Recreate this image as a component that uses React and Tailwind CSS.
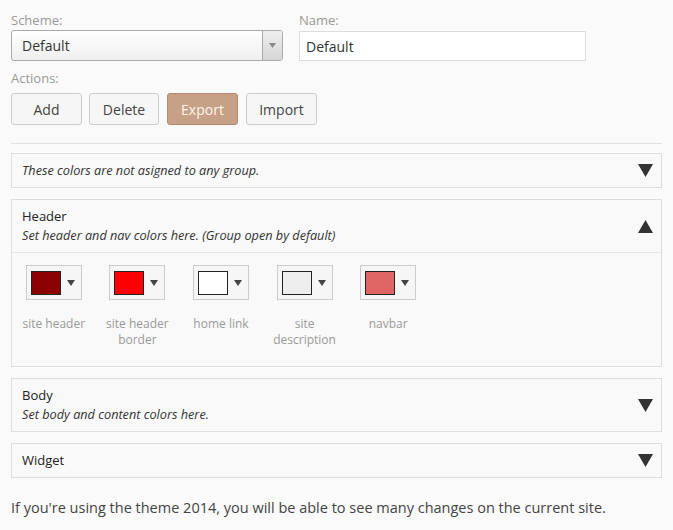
import React from "react";

const swatches = [
  { color: "#8b0000", label: ["site header"] },
  { color: "#ff0000", label: ["site header", "border"] },
  { color: "#ffffff", label: ["home link"] },
  { color: "#eeeeee", label: ["site", "description"] },
  { color: "#e06666", label: ["navbar"] },
];

function Tri({ up, className }) {
  return (
    <svg width="15" height="13" viewBox="0 0 15 13" className={className} aria-hidden>
      {up ? <path d="M7.5 0 L15 13 L0 13 Z" fill="#333" /> : <path d="M0 0 L15 0 L7.5 13 Z" fill="#333" />}
    </svg>
  );
}

function Group({ title, sub, open, children }) {
  return (
    <div className="border border-[#dedede] bg-[#f9f9f9]">
      <div className="flex items-center justify-between pl-[10px] pr-[8px] py-[7px] min-h-[33px]">
        <div>
          {title && <div className="text-[13px] leading-[19px] text-[#222]">{title}</div>}
          {sub && <div className="text-[12.7px] leading-[19px] italic text-[#333]">{sub}</div>}
        </div>
        <Tri up={open} />
      </div>
      {children}
    </div>
  );
}

export default function App() {
  return (
    <div
      className="min-h-[530px] w-[673px] bg-[#fafafa] px-[11px] text-[#333]"
      style={{ fontFamily: "'Open Sans', 'Liberation Sans', sans-serif" }}
    >
      <div className="flex gap-[16px] pt-[10px]">
        <div className="w-[272px]">
          <div className="text-[13px] leading-[20px] text-[#999]">Scheme:</div>
          <div className="flex h-[31px] overflow-hidden rounded-[3px] border border-[#aaa] bg-gradient-to-b from-white to-[#efefef]">
            <div className="flex flex-1 items-center pl-[10px] text-[14px]">Default</div>
            <div className="flex w-[20px] items-center justify-center border-l border-[#aaa] bg-gradient-to-b from-[#eee] to-[#d5d5d5]">
              <svg width="7" height="5" viewBox="0 0 7 5"><path d="M0 0 L7 0 L3.5 5 Z" fill="#888" /></svg>
            </div>
          </div>
        </div>
        <div className="w-[287px]">
          <div className="text-[13px] leading-[20px] text-[#999]">Name:</div>
          <div className="mt-[1px] flex h-[30px] items-center border border-[#ddd] bg-white pl-[6px] text-[14px]">Default</div>
        </div>
      </div>

      <div className="mt-[7px] text-[13px] leading-[20px] text-[#999]">Actions:</div>
      <div className="mt-[5px] flex text-[14px]">
        <button className="h-[32px] w-[71px] rounded-[3px] border border-[#ccc] bg-[#f6f6f6] text-[#444]">Add</button>
        <button className="ml-[7px] h-[32px] w-[70px] rounded-[3px] border border-[#ccc] bg-[#f6f6f6] text-[#444]">Delete</button>
        <button className="ml-[8px] h-[32px] w-[71px] rounded-[3px] border border-[#b68c6c] bg-[#c6a185] text-[#fdf6ee]">Export</button>
        <button className="ml-[8px] h-[32px] w-[71px] rounded-[3px] border border-[#ccc] bg-[#f6f6f6] text-[#444]">Import</button>
      </div>

      <div className="mt-[18px] border-t border-[#e2e2e2]" />

      <div className="mt-[9px] flex flex-col gap-[11px]">
        <Group sub="These colors are not asigned to any group." />
        <Group title="Header" sub="Set header and nav colors here. (Group open by default)" open>
          <div className="flex border-t border-[#e6e6e6] pb-[18px] pt-[12px]">
            {swatches.map((s) => (
              <div key={s.color} className="flex w-[83.6px] flex-col items-center">
                <div className="flex h-[35px] w-[56px] items-center gap-[6px] border border-[#ccc] bg-[#f6f6f6] pl-[4px]">
                  <div className="h-[24px] w-[30px] border border-[#222]" style={{ backgroundColor: s.color }} />
                  <svg width="8" height="6" viewBox="0 0 8 6"><path d="M0 0 L8 0 L4 6 Z" fill="#444" /></svg>
                </div>
                <div className="mt-[16px] text-center text-[12px] leading-[16px] text-[#999]">
                  {s.label.map((l) => (
                    <div key={l}>{l}</div>
                  ))}
                </div>
              </div>
            ))}
          </div>
        </Group>
        <Group title="Body" sub="Set body and content colors here." />
        <Group title="Widget" />
      </div>

      <p className="mt-[20px] text-[14.5px] leading-[20px] text-[#444]">
        If you're using the theme 2014, you will be able to see many changes on the current site.
      </p>
    </div>
  );
}
